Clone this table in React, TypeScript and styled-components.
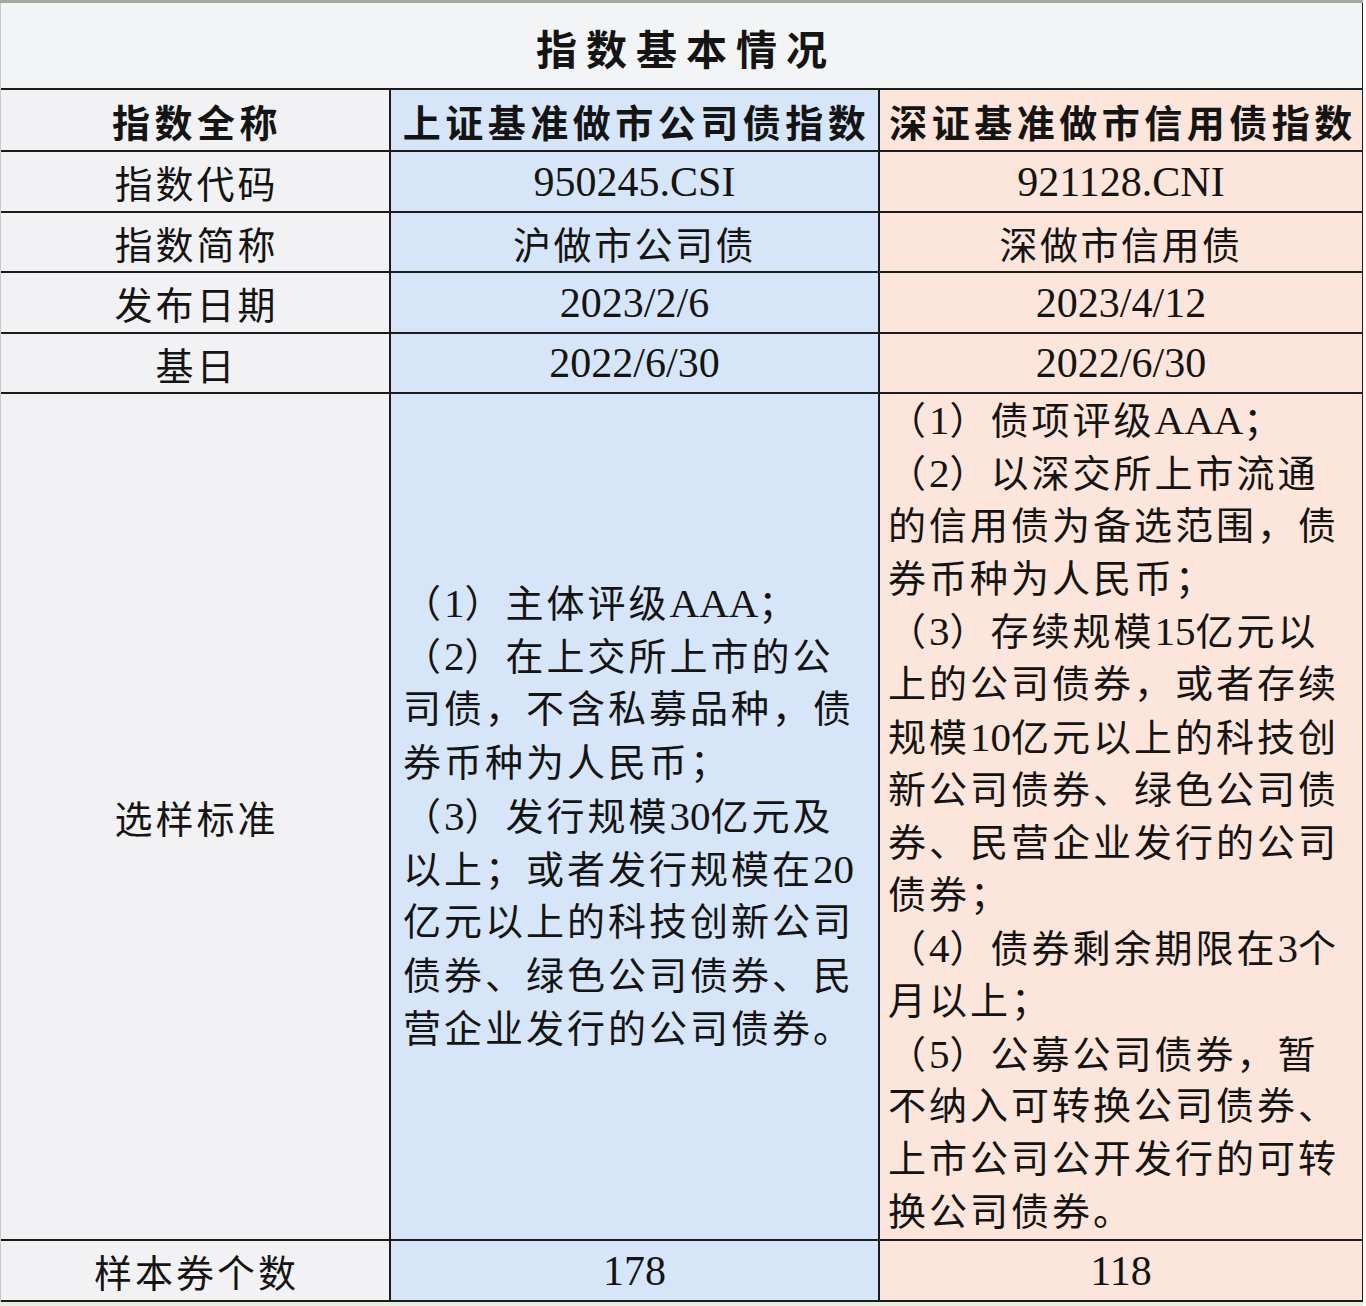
import React from "react";
import styled, { createGlobalStyle, css } from "styled-components";

const Global = createGlobalStyle`
  html, body { margin: 0; padding: 0; background: #ffffff; }
  body { font-family: "Liberation Serif", "Noto Sans CJK SC", serif; color: #141414; }
`;

type Tone = "gray" | "blue" | "peach";

const toneBg: Record<Tone, string> = {
  gray: "#f2f2f4",
  blue: "#d6e6f8",
  peach: "#fce5da",
};

const Frame = styled.div`
  width: 1363px;
  border-top: 3px solid #a3ab9f;
  border-bottom: 4px solid #e6eedf;
`;

const Sheet = styled.div`
  display: grid;
  grid-template-columns: 388px 487px 482px;
  grid-template-rows: 85px 60px 59px 58px 59px 58px 845px 59px;
  gap: 2px;
  padding: 0 2px 2px 0;
  background: #1c1c1c;
  border-left: 1px solid #c9c9cc;
`;

const TitleCell = styled.div`
  grid-column: 1 / -1;
  background: #f3f4f6;
  display: flex;
  align-items: center;
  justify-content: center;
  font-family: "Noto Sans CJK SC", sans-serif;
  font-weight: 700;
  font-size: 41px;
  letter-spacing: 9px;
  padding-left: 9px;
  padding-top: 2px;
`;

const Cell = styled.div<{ $tone: Tone; $bold?: boolean; $value?: boolean }>`
  background: ${(p) => toneBg[p.$tone]};
  display: flex;
  align-items: center;
  justify-content: center;
  white-space: nowrap;
  font-size: 38px;
  letter-spacing: 3px;
  padding-left: 3px;
  font-weight: ${(p) => (p.$bold ? 700 : 400)};
  ${(p) =>
    p.$bold &&
    css`
      letter-spacing: 4.5px;
      padding-left: 4px;
    `}
  ${(p) =>
    p.$value &&
    css`
      font-size: 42px;
      letter-spacing: 0;
      padding-left: 0;
    `}
`;

const CjkValue = styled.span`
  font-size: 38px;
  letter-spacing: 2.5px;
`;

const CriteriaCell = styled.div<{ $tone: Tone; $pad: number }>`
  background: ${(p) => toneBg[p.$tone]};
  display: flex;
  flex-direction: column;
  justify-content: center;
  padding-left: ${(p) => p.$pad}px;
  font-size: 38px;
  letter-spacing: 3px;
`;

const Line = styled.div<{ $h: number }>`
  height: ${(p) => p.$h}px;
  line-height: ${(p) => p.$h}px;
  white-space: nowrap;
`;

const Latin = styled.span`
  font-size: 41px;
  letter-spacing: 0;
`;

const renderLine = (s: string) => {
  const parts = s.split(/([A-Za-z0-9]+)/);
  return parts.map((p, i) =>
    /^[A-Za-z0-9]+$/.test(p) ? <Latin key={i}>{p}</Latin> : <React.Fragment key={i}>{p}</React.Fragment>
  );
};

const leftLines = [
  "（1）主体评级AAA；",
  "（2）在上交所上市的公",
  "司债，不含私募品种，债",
  "券币种为人民币；",
  "（3）发行规模30亿元及",
  "以上；或者发行规模在20",
  "亿元以上的科技创新公司",
  "债券、绿色公司债券、民",
  "营企业发行的公司债券。",
];

const rightLines = [
  "（1）债项评级AAA；",
  "（2）以深交所上市流通",
  "的信用债为备选范围，债",
  "券币种为人民币；",
  "（3）存续规模15亿元以",
  "上的公司债券，或者存续",
  "规模10亿元以上的科技创",
  "新公司债券、绿色公司债",
  "券、民营企业发行的公司",
  "债券；",
  "（4）债券剩余期限在3个",
  "月以上；",
  "（5）公募公司债券，暂",
  "不纳入可转换公司债券、",
  "上市公司公开发行的可转",
  "换公司债券。",
];

type Row = { label: string; a: string; b: string; cjk?: boolean };

const rows: Row[] = [
  { label: "指数代码", a: "950245.CSI", b: "921128.CNI" },
  { label: "指数简称", a: "沪做市公司债", b: "深做市信用债", cjk: true },
  { label: "发布日期", a: "2023/2/6", b: "2023/4/12" },
  { label: "基日", a: "2022/6/30", b: "2022/6/30" },
];

export default function App() {
  return (
    <>
      <Global />
      <Frame>
        <Sheet>
          <TitleCell>指数基本情况</TitleCell>

          <Cell $tone="gray" $bold>指数全称</Cell>
          <Cell $tone="blue" $bold>上证基准做市公司债指数</Cell>
          <Cell $tone="peach" $bold>深证基准做市信用债指数</Cell>

          {rows.map((r) => (
            <React.Fragment key={r.label}>
              <Cell $tone="gray">{r.label}</Cell>
              <Cell $tone="blue" $value>
                {r.cjk ? <CjkValue>{r.a}</CjkValue> : r.a}
              </Cell>
              <Cell $tone="peach" $value>
                {r.cjk ? <CjkValue>{r.b}</CjkValue> : r.b}
              </Cell>
            </React.Fragment>
          ))}

          <Cell $tone="gray">选样标准</Cell>
          <CriteriaCell $tone="blue" $pad={12}>
            {leftLines.map((l, i) => (
              <Line key={i} $h={53.3}>{renderLine(l)}</Line>
            ))}
          </CriteriaCell>
          <CriteriaCell $tone="peach" $pad={8}>
            {rightLines.map((l, i) => (
              <Line key={i} $h={52.8}>{renderLine(l)}</Line>
            ))}
          </CriteriaCell>

          <Cell $tone="gray">样本券个数</Cell>
          <Cell $tone="blue" $value>178</Cell>
          <Cell $tone="peach" $value>118</Cell>
        </Sheet>
      </Frame>
    </>
  );
}
